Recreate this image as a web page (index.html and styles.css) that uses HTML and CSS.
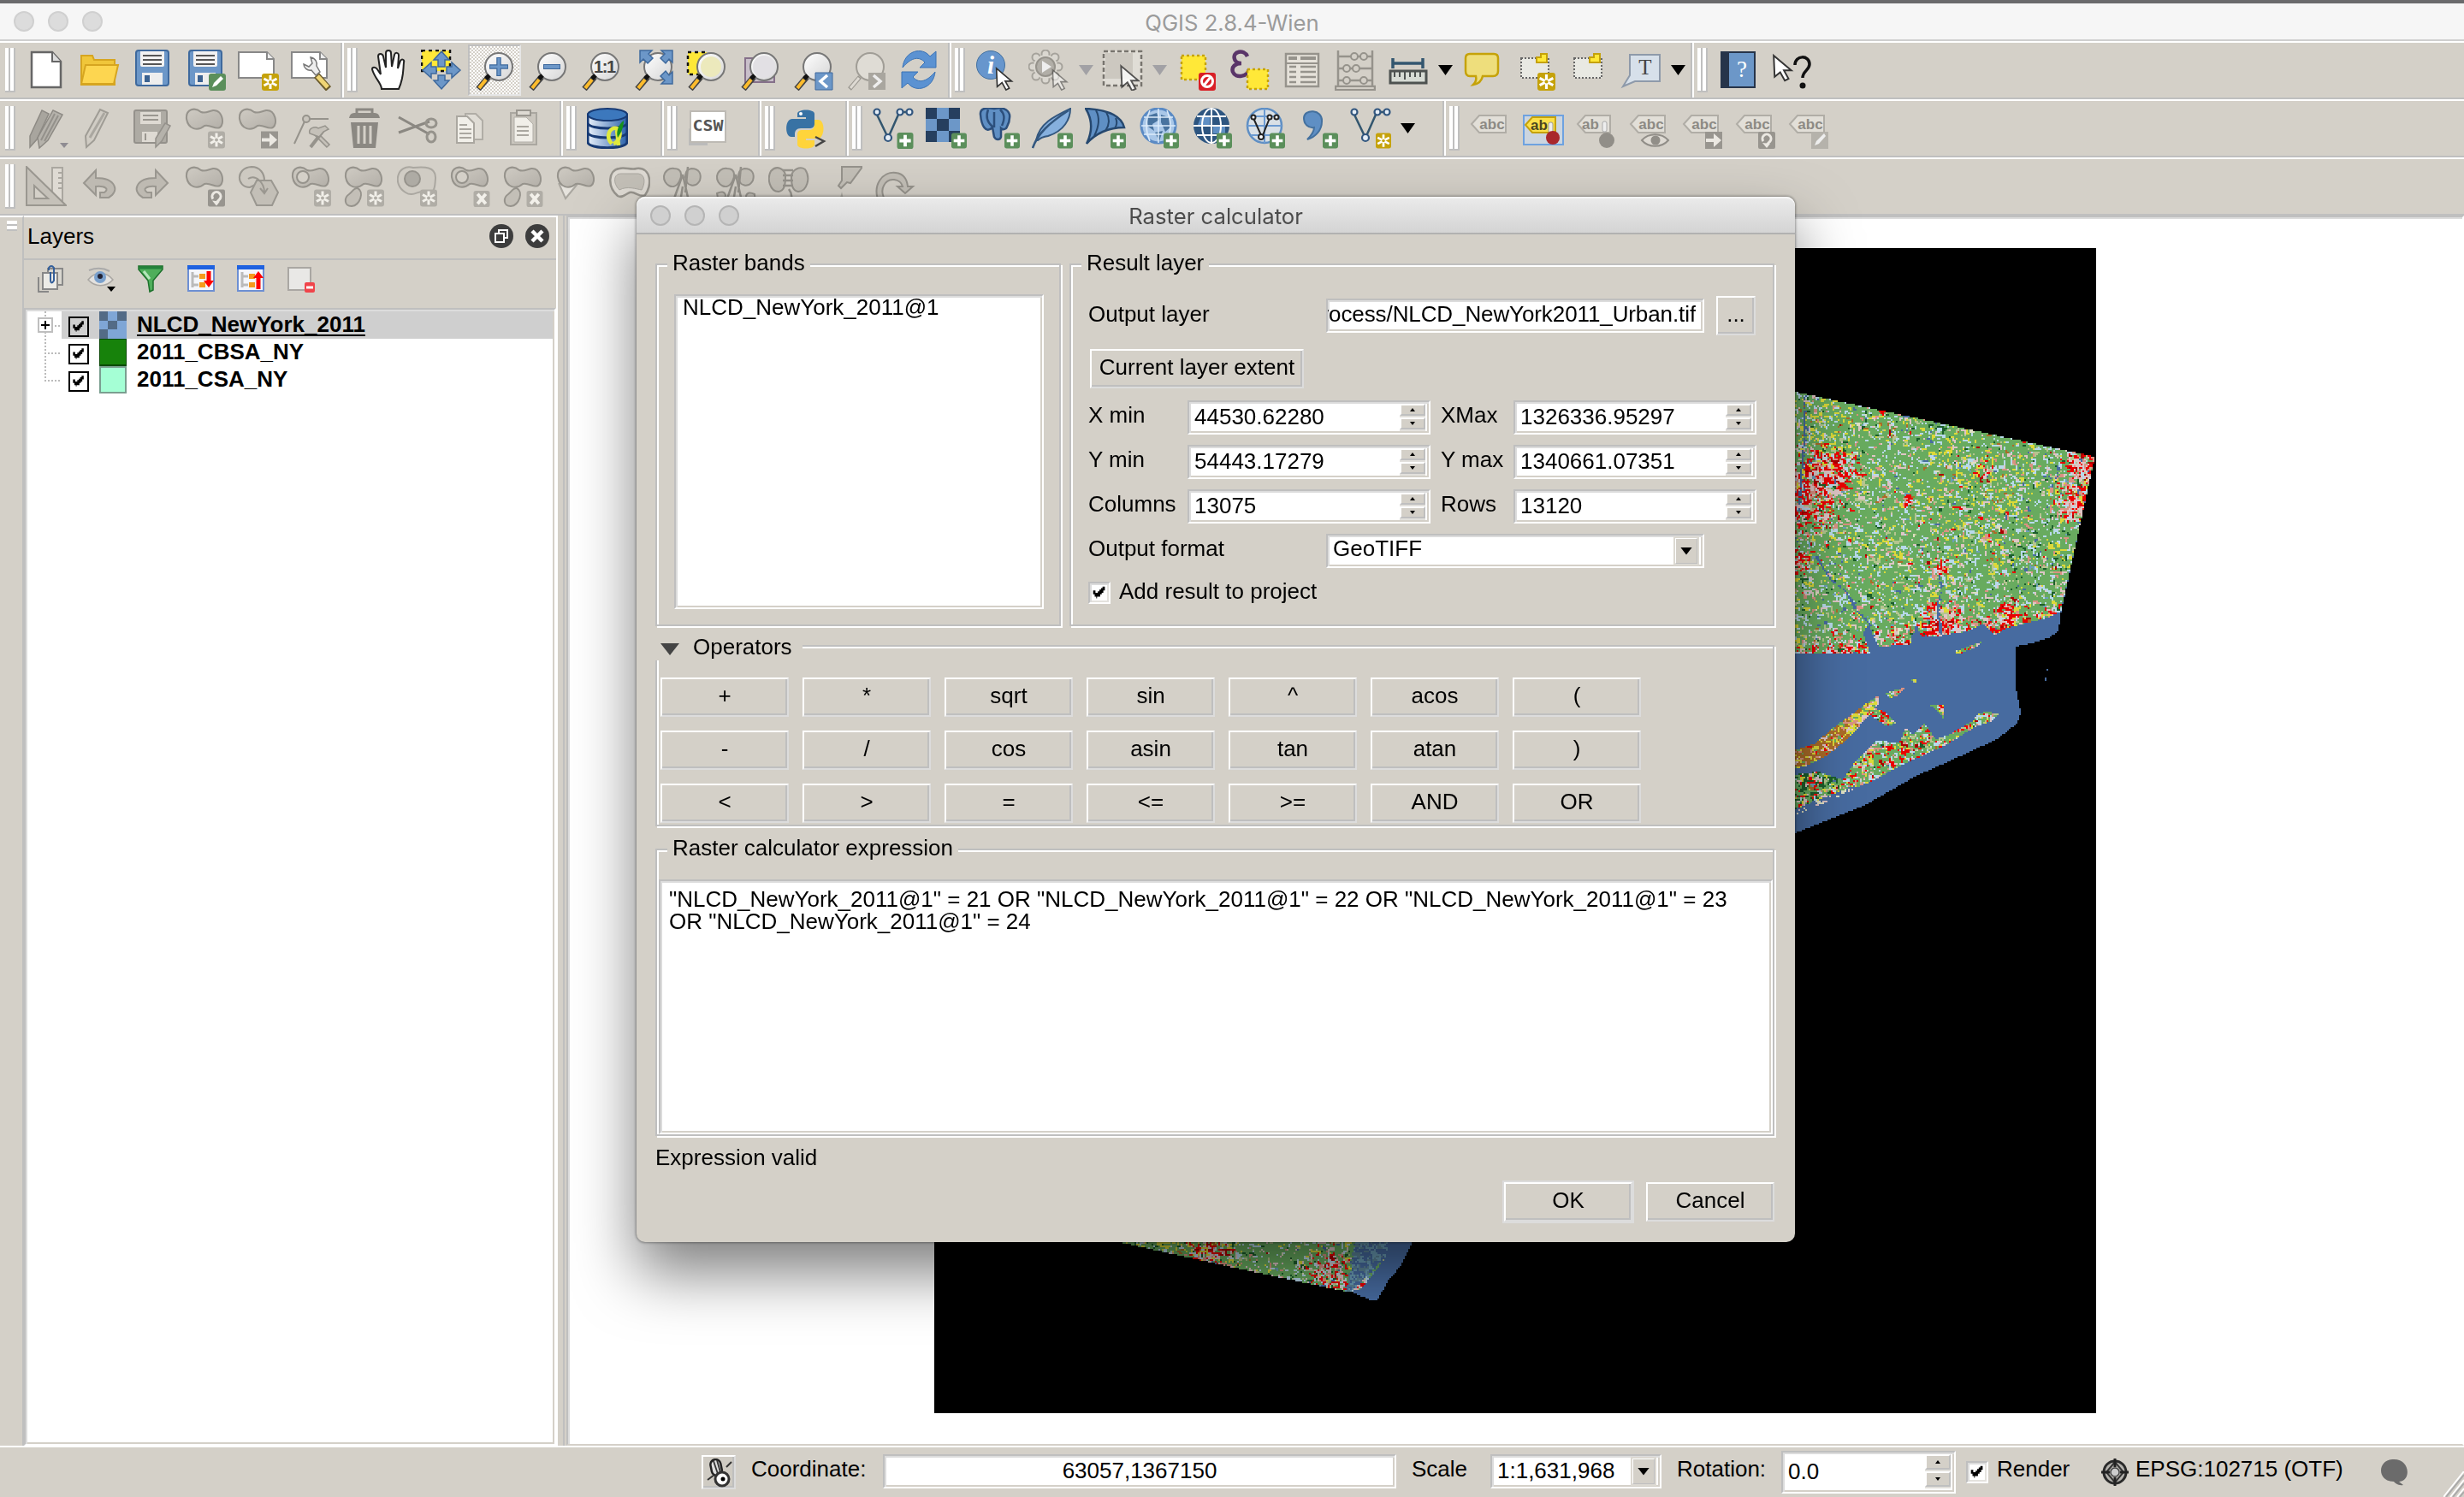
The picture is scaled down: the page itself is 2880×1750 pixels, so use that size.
FILE: index.html
```html
<!DOCTYPE html>
<html lang="en">
<head>
<meta charset="utf-8">
<title>QGIS 2.8.4-Wien</title>
<link rel="stylesheet" href="styles.css">
</head>
<body>
<svg class="defs" aria-hidden="true">
<defs>
<linearGradient id="gLens" x1="0" y1="0" x2="1" y2="1"><stop offset="0" stop-color="#fff"/><stop offset="1" stop-color="#d5d5d5"/></linearGradient>
<linearGradient id="gDb" x1="0" x2="1"><stop offset="0" stop-color="#e8f0fa"/><stop offset="1" stop-color="#2b62ab"/></linearGradient>
<linearGradient id="gBlob" x1="0" y1="0" x2="1" y2="1"><stop offset="0" stop-color="#cfcbc3"/><stop offset="1" stop-color="#b3afa8"/></linearGradient>
</defs>
<symbol id="bPlus" viewBox="0 0 20 20"><rect width="20" height="20" rx="3" fill="#5b8f5b"/><path d="M10 3v14M3 10h14" stroke="#fff" stroke-width="4"/></symbol>
<symbol id="bPen" viewBox="0 0 20 20"><rect width="20" height="20" rx="3" fill="#5b8f5b"/><path d="M4 16l2-5 8-8 3 3-8 8z" fill="#fff"/></symbol>
<symbol id="bGold" viewBox="0 0 20 20"><rect width="20" height="20" rx="3" fill="#c5a20a"/><path d="M10 2v16M2.500 6l15 8M2.500 14l15-8" stroke="#fff" stroke-width="3"/><circle cx="10" cy="10" r="2" fill="#c5a20a"/></symbol>
<symbol id="bStar" viewBox="0 0 20 20"><rect width="20" height="20" rx="3" fill="#b0ada6"/><path d="M10 2v16M3 6l14 8M3 14l14-8" stroke="#f2f0ea" stroke-width="3"/><circle cx="10" cy="10" r="2" fill="#b0ada6"/></symbol>
<symbol id="bX" viewBox="0 0 20 20"><rect width="20" height="20" rx="3" fill="#b0ada6"/><path d="M5 4l10 12M15 4L5 16" stroke="#f2f0ea" stroke-width="4"/></symbol>
<symbol id="bArrow" viewBox="0 0 20 20"><rect width="20" height="20" fill="#98958f"/><path d="M1 10h12" fill="none" stroke="#ebe8e2" stroke-width="4"/><path d="M10 2l9 8-9 8z" fill="#ebe8e2"/></symbol>
<symbol id="bRot" viewBox="0 0 20 20"><rect width="20" height="20" rx="2" fill="#98958f"/><path d="M6 11a5 5 0 1 1 8 0c-1 2-4 2-4 6" fill="none" stroke="#ebe8e2" stroke-width="3"/><path d="M5 13l5 6 4-5z" fill="#ebe8e2"/></symbol>
<symbol id="blob" viewBox="0 0 48 48"><path d="M2 13C1 1 12-1 19 5c5 2 9-1 14-2 11-1 14 16 8 20-6 3-11-4-18-2C15 28 4 25 2 13z" fill="url(#gBlob)" stroke="#96938c" stroke-width="2"/></symbol>
<symbol id="lens" viewBox="0 0 48 48"><path d="M5 46L17 32" stroke="#444" stroke-width="7"/><path d="M6 45L14 35" stroke="#fdbc2c" stroke-width="4"/><circle cx="29" cy="20" r="16" fill="url(#gLens)" stroke="#777" stroke-width="2"/><path d="M14 34l4-4" stroke="#111" stroke-width="5"/></symbol>
<symbol id="cursor" viewBox="0 0 24 30"><path d="M2 2l19 16h-8l5 9-4 2-5-9-6 5z" fill="#fff" stroke="#333" stroke-width="1.800"/></symbol>

<symbol id="new" viewBox="0 0 48 48"><path d="M7 3h24l10 11v30H7z" fill="#fff" stroke="#666" stroke-width="2.500"/><path d="M31 3v11h10" fill="#ddd" stroke="#666" stroke-width="2"/></symbol>
<symbol id="open" viewBox="0 0 48 48"><path d="M3 7h13l2 5h24v29H3z" fill="#f0c63a" stroke="#d6a520" stroke-width="2"/><path d="M8 18h38l-5 22H3z" fill="#fdd650" stroke="#d6a520" stroke-width="2"/></symbol>
<symbol id="save" viewBox="0 0 48 48"><rect x="5" y="1" width="38" height="41" rx="3" fill="#6c97c8" stroke="#3e699d" stroke-width="2"/><path d="M10 2h28v16q0 2-2 2H12q-2 0-2-2z" fill="#f2f2f2"/><path d="M13 7h22M13 12h22M13 17h22" stroke="#555" stroke-width="1.800"/><path d="M12 27h24v14H12z" fill="#eee"/><path d="M15 30h6v8h-6z" fill="#3b6291"/></symbol>
<symbol id="saveas" viewBox="0 0 48 48"><use href="#save"/><use href="#bPen" x="28" y="28" width="20" height="20"/></symbol>
<symbol id="sheet" viewBox="0 0 48 48"><path d="M1 3h33l8 8v22H1z" fill="#fff" stroke="#888" stroke-width="2"/><path d="M34 3v8h8" fill="#eee" stroke="#888" stroke-width="2"/></symbol>
<symbol id="newprint" viewBox="0 0 48 48"><use href="#sheet"/><use href="#bGold" x="28" y="28" width="20" height="20"/></symbol>
<symbol id="composer" viewBox="0 0 48 48"><use href="#sheet"/><path d="M30 30l14 16" stroke="#6a5a2b" stroke-width="8"/><path d="M31 31l12 13" stroke="#f0d575" stroke-width="5"/><path d="M23 9c6 1 8 6 7 10l4 7-5 4-5-6c-5 1-9-3-9-7l6 3 4-4z" fill="#eee" stroke="#777" stroke-width="1.500"/></symbol>
<symbol id="hand" viewBox="0 0 48 48"><path d="M16 46c0-7-8-12-11-23 0-3 4-3 6 0l4 6-3-21c0-4 5-4 6 0l3 13V4c0-4 6-4 6 0l1 16 3-14c1-3 5-3 5 1l-1 15 3-9c2-3 5-1 4 2-1 10 0 18-6 31z" fill="#fff" stroke="#222" stroke-width="2"/></symbol>
<symbol id="pan" viewBox="0 0 48 48"><path d="M1 1h33v24H1z" fill="#ffe838" stroke="#111" stroke-width="2.500" stroke-dasharray="4 4"/><g fill="#6c97c8" stroke="#3e699d" stroke-width="1.500"><path d="M24 2l9 10h-5v8h-8v-8h-5zM24 46l9-10h-5v-6h-8v6h-5zM2 24l10-9v5h6v8h-6v5zM46 24l-10-9v5h-6v8h6v5z"/></g></symbol>
<symbol id="zin" viewBox="0 0 48 48"><use href="#lens"/><path d="M29 9v22M18 20h22" stroke="#3e699d" stroke-width="5.500"/><path d="M29 10v20M19 20h20" stroke="#6c97c8" stroke-width="3"/></symbol>
<symbol id="zout" viewBox="0 0 48 48"><use href="#lens"/><path d="M19 20h20" stroke="#3e699d" stroke-width="6"/><path d="M20 20h18" stroke="#6c97c8" stroke-width="4"/></symbol>
<symbol id="z11" viewBox="0 0 48 48"><use href="#lens"/><text x="29" y="27" text-anchor="middle" font-size="20" font-weight="bold" textLength="26" fill="#444">1:1</text></symbol>
<symbol id="zfull" viewBox="0 0 48 48"><use href="#lens"/><g fill="#6c97c8" stroke="#3e699d" stroke-width="1.500"><path d="M8 1h14l-4 4 5 5-6 6-5-5-4 4zM46 1H33l4 4-5 5 6 6 4-5 4 4zM46 40H33l4-4-5-5 6-6 4 5 4-4z"/></g></symbol>
<symbol id="zsel" viewBox="0 0 48 48"><path d="M2 3h22v26H2z" fill="#ffe838" stroke="#111" stroke-width="2.500" stroke-dasharray="4 4"/><use href="#lens"/><circle cx="29" cy="20" r="12" fill="#ece9bc"/></symbol>
<symbol id="zlay" viewBox="0 0 48 48"><path d="M7 10h34v28H7z" fill="#c9bfca" stroke="#85708a" stroke-width="2"/><use href="#lens"/><circle cx="29" cy="20" r="13" fill="#e2e0e4"/></symbol>
<symbol id="zlast" viewBox="0 0 48 48"><use href="#lens"/><path d="M27 27h20v20H27z" fill="#6c97c8" stroke="#3e699d"/><path d="M41 30l-8 7 8 7" fill="none" stroke="#fff" stroke-width="3.500"/></symbol>
<symbol id="znext" viewBox="0 0 48 48"><path d="M5 46L17 32" stroke="#9a9790" stroke-width="5"/><path d="M6 45L16 33" stroke="#dedad3" stroke-width="3"/><circle cx="29" cy="20" r="16" fill="#dfdcd5" stroke="#a09d96" stroke-width="2"/><path d="M27 27h20v20H27z" fill="#a9a69f"/><path d="M33 30l8 7-8 7" fill="none" stroke="#eee" stroke-width="3.500"/></symbol>
<symbol id="refresh" viewBox="0 0 48 48"><path d="M5 21C7 1 28-4 37 8l7-6v19H25l6-6C25 8 16 8 5 21z" fill="#5b92d2" stroke="#3b73b5"/><path d="M43 26C41 46 20 51 11 39l-7 6V26h19l-6 6c6 7 15 7 26-6z" fill="#5b92d2" stroke="#3b73b5"/></symbol>
<symbol id="ident" viewBox="0 0 48 48"><circle cx="18" cy="18" r="16.500" fill="#6796cd" stroke="#44719f"/><text x="18" y="28" text-anchor="middle" font-family="Liberation Serif,serif" font-style="italic" font-weight="bold" font-size="29" fill="#fff">i</text><use href="#cursor" x="22" y="20" width="24" height="28"/></symbol>
<symbol id="action" viewBox="0 0 48 48"><g fill="#dad7d0" stroke="#a5a29b" stroke-width="2"><circle cx="20" cy="5" r="4.500"/><circle cx="20" cy="35" r="4.500"/><circle cx="5" cy="20" r="4.500"/><circle cx="35" cy="20" r="4.500"/><circle cx="9" cy="9" r="4.500"/><circle cx="31" cy="9" r="4.500"/><circle cx="9" cy="31" r="4.500"/><circle cx="31" cy="31" r="4.500"/></g><circle cx="20" cy="20" r="14" fill="#dad7d0"/><circle cx="20" cy="20" r="11" fill="#b1aea7" stroke="#96938c" stroke-width="2"/><path d="M16 13l11 7-11 7z" fill="#eee"/><g opacity=".5"><use href="#cursor" x="25" y="22" width="24" height="26"/></g></symbol>
<symbol id="select" viewBox="0 0 48 48"><path d="M2 2h44v40H2z" fill="#e0ddd6" stroke="#77746e" stroke-width="2.500" stroke-dasharray="5 3"/><path d="M4 4h32v30H4z" fill="#ccc8c0"/><g opacity=".8"><use href="#cursor" x="18" y="17" width="30" height="32"/></g></symbol>
<symbol id="desel" viewBox="0 0 48 48"><path d="M7 7h28v28H7z" fill="#ffe838" stroke="#c5a20a" stroke-width="2.500" stroke-dasharray="3 3"/><rect x="27" y="27" width="20" height="21" rx="3" fill="#d91f26"/><circle cx="37" cy="37" r="6.500" fill="none" stroke="#fff" stroke-width="3"/><path d="M33 42l8-10" stroke="#fff" stroke-width="3"/></symbol>
<symbol id="expr" viewBox="0 0 48 48"><path d="M22 8C18-1 4 2 7 11c1 4 6 5 8 5C8 16 3 20 5 26c3 8 17 6 19-3" fill="none" stroke="#5a3569" stroke-width="4.500"/><path d="M22 23h24v23H22z" fill="#ffe838" stroke="#c5a20a" stroke-width="2.500" stroke-dasharray="3 3"/></symbol>
<symbol id="table" viewBox="0 0 48 48"><path d="M5 5h38v38H5z" fill="#e6e2da" stroke="#96938c" stroke-width="2.500"/><path d="M8 10h10M22 10h18" stroke="#96938c" stroke-width="4"/><path d="M5 16h38" stroke="#96938c" stroke-width="2"/><path d="M9 20h8M22 20h18M9 26h8M22 26h18M9 32h8M22 32h18M9 38h8M22 38h18" stroke="#96938c" stroke-width="2.500"/></symbol>
<symbol id="abacus" viewBox="0 0 48 48"><path d="M4 1v42M44 1v42M1 43h46v4H1zM4 8h40M4 22h40M4 36h40" fill="#e6e2da" stroke="#96938c" stroke-width="2.500"/><g fill="#d4d0c8" stroke="#96938c" stroke-width="2"><circle cx="23" cy="8" r="4"/><circle cx="34" cy="8" r="4"/><circle cx="14" cy="22" r="4"/><circle cx="25" cy="22" r="4"/><circle cx="14" cy="36" r="4"/><circle cx="34" cy="36" r="4"/></g></symbol>
<symbol id="ruler" viewBox="0 0 48 48"><path d="M6 10v12M41 10v12M6 16h35" stroke="#33566f" stroke-width="3.500"/><path d="M3 25h42v14H3z" fill="#d6dbd4" stroke="#4d5250" stroke-width="3"/><path d="M8 26v6M14 26v6M20 26v9M26 26v6M32 26v6M38 26v6" stroke="#4d5250" stroke-width="2"/></symbol>
<symbol id="tips" viewBox="0 0 48 48"><path d="M10 5h28q5 0 5 5v15q0 6-6 6H25c-1 5-5 9-11 10 3-3 4-6 3-10h-7q-5 0-5-6V10q0-5 5-5z" fill="#eede7c" stroke="#c5a20a" stroke-width="2.500"/></symbol>
<symbol id="bm" viewBox="0 0 48 48"><path d="M8 10h32v23H8z" fill="#e9e9e3" stroke="#666" stroke-width="2" stroke-dasharray="2 2"/><path d="M31 5h7v10H26v-6h5z" fill="#ffe838" stroke="#c5a20a" stroke-width="2"/></symbol>
<symbol id="bmnew" viewBox="0 0 48 48"><use href="#bm"/><use href="#bGold" x="27" y="27" width="21" height="21"/></symbol>
<symbol id="text" viewBox="0 0 48 48"><path d="M11 6h35v31H17L3 43l8-13z" fill="#d7e0ea" stroke="#8e9aaa" stroke-width="2"/><text x="29" y="29" text-anchor="middle" font-family="Liberation Serif,serif" font-size="25" fill="#444">T</text></symbol>
<symbol id="book" viewBox="0 0 48 48"><path d="M4 3h39v41H4z" fill="#6c97c8" stroke="#26344a" stroke-width="2"/><path d="M4 3h9v41H4z" fill="#26344a"/><text x="28" y="32" text-anchor="middle" font-family="Liberation Serif,serif" font-size="27" fill="#fff">?</text></symbol>
<symbol id="whats" viewBox="0 0 48 48"><use href="#cursor" x="1" y="1" width="26" height="40"/><path d="M28 18c0-12 17-12 17-1 0 7-8 8-8 16" fill="none" stroke="#111" stroke-width="3.500"/><circle cx="37" cy="42" r="3.500" fill="#111"/></symbol>

<symbol id="pencils" viewBox="0 0 48 48"><g stroke="#8d8a84" stroke-width="1.500"><path d="M5 33L19 3l8 4-14 30-8 9z" fill="#a8a59e"/><path d="M14 35L32 3l11 5-17 30-10 9z" fill="#b5b2ab"/></g><path d="M18 38L34 7M22 39L38 9" stroke="#94918b" stroke-width="2"/></symbol>
<symbol id="pencil" viewBox="0 0 48 48"><path d="M8 33L25 2l9 4-16 32-9 8z" fill="#d0ccc4" stroke="#9f9c95" stroke-width="2"/><path d="M13 35L30 6" stroke="#aaa7a0" stroke-width="3"/></symbol>
<symbol id="gsave" viewBox="0 0 48 48"><rect x="3" y="3" width="38" height="38" rx="2" fill="#aeaba4" stroke="#94918b" stroke-width="2"/><path d="M10 5h24v14H10zM12 28h18v12H12z" fill="#dedad3"/><path d="M13 9h18M13 14h18M16 30v8" stroke="#9a9790" stroke-width="2"/><path d="M28 36L39 18l6 3-10 18-7 7z" fill="#b5b2ab" stroke="#94918b" stroke-width="1.500"/></symbol>
<symbol id="blobStar" viewBox="0 0 48 48"><use href="#blob"/><use href="#bStar" x="27" y="27" width="20" height="21"/></symbol>
<symbol id="blobArrow" viewBox="0 0 48 48"><use href="#blob"/><use href="#bArrow" x="27" y="27" width="20" height="21"/></symbol>
<symbol id="blobRot" viewBox="0 0 48 48"><use href="#blob"/><use href="#bRot" x="27" y="27" width="20" height="21"/></symbol>
<symbol id="node" viewBox="0 0 48 48"><path d="M4 42L16 16M20 13h24" stroke="#96938c" stroke-width="2"/><circle cx="18" cy="13" r="4" fill="#c9c5bd" stroke="#96938c" stroke-width="2"/><path d="M26 27l18 18" stroke="#96938c" stroke-width="6"/><path d="M27 28l16 16" stroke="#c5c1b9" stroke-width="2.500"/><path d="M40 24L23 46" stroke="#96938c" stroke-width="4"/><path d="M22 30c-2-6 6-9 10-6l8-3 4 4-6 3-5 6z" fill="#c5c1b9" stroke="#96938c" stroke-width="1.500"/></symbol>
<symbol id="trash" viewBox="0 0 48 48"><path d="M15 6V2h18v4" fill="none" stroke="#8b8882" stroke-width="3"/><path d="M6 12q1-6 6-6h24q5 0 6 6zM8 17h32l-3 30H11z" fill="#8b8882"/><path d="M17 21v21M24 21v21M31 21v21" stroke="#d4d0c8" stroke-width="3"/></symbol>
<symbol id="cut" viewBox="0 0 48 48"><path d="M2 11l36 20M2 29l36-13" stroke="#8b8882" stroke-width="3"/><ellipse cx="40" cy="34" rx="5" ry="6" fill="none" stroke="#96938c" stroke-width="3"/><ellipse cx="40" cy="18" rx="6" ry="5" fill="none" stroke="#96938c" stroke-width="3"/></symbol>
<symbol id="copy" viewBox="0 0 48 48"><path d="M18 7h12l8 8v22H18z" fill="#e0ddd6" stroke="#b0ada6" stroke-width="2"/><path d="M8 10h12l8 8v23H8z" fill="#f1efe9" stroke="#aaa7a0" stroke-width="2"/><path d="M11 20h9M11 25h14M11 30h14M11 35h14" stroke="#aaa7a0" stroke-width="1.800"/></symbol>
<symbol id="paste" viewBox="0 0 48 48"><path d="M9 6h30v37H9z" fill="#cac6be" stroke="#aaa7a0" stroke-width="2"/><path d="M16 3h16v6H16z" fill="#dedad3" stroke="#9a9790" stroke-width="2"/><path d="M13 11h14l8 8v21H13z" fill="#f1efe9" stroke="#b0ada6"/><path d="M16 22h14M16 27h14M16 32h14" stroke="#aaa7a0" stroke-width="1.800"/></symbol>
<symbol id="db" viewBox="0 0 48 48"><path d="M1 8v32c0 9 46 9 46 0V8z" fill="url(#gDb)" stroke="#173a74" stroke-width="3"/><ellipse cx="24" cy="8" rx="23" ry="7" fill="#3c78bd" stroke="#173a74" stroke-width="2"/><path d="M1 18c2 8 44 8 46 0M1 29c2 8 44 8 46 0" fill="none" stroke="#173a74" stroke-width="3"/><path d="M29 42c-8-9-2-20 6-18 6 3 4 15-4 18M35 26l2 18" fill="none" stroke="#e0ea3c" stroke-width="4.500"/><path d="M43 15c-7 5-9 14-7 20 4-6 7-12 7-20z" fill="#17901d"/></symbol>
<symbol id="csw" viewBox="0 0 48 48"><path d="M1 24v20h22v-4" fill="#bbb"/><path d="M3 4h41v36H3z" fill="#fff" stroke="#bdbab4" stroke-width="2"/><text x="23.500" y="27" text-anchor="middle" font-family="DejaVu Sans Mono,monospace" font-weight="bold" font-size="18" textLength="36" lengthAdjust="spacingAndGlyphs" fill="#555">CSW</text></symbol>
<symbol id="python" viewBox="0 0 48 48"><path d="M14 12V7c0-6 20-6 20 0v12c0 4-3 5-6 5H18c-5 0-7 3-7 7v3H7C-1 34-1 13 8 13h16v-2H14z" fill="#3872a4"/><path d="M34 14h4c9 0 8 20 1 22H24v2h10v5c0 6-20 6-20 0V31c0-4 3-5 6-5h8c5 0 6-4 6-7z" fill="#ffd43b"/><circle cx="18" cy="7" r="2" fill="#fff"/><path d="M35 34l10 5-10 6" fill="none" stroke="#444" stroke-width="2.500"/></symbol>
<symbol id="vec" viewBox="0 0 48 48"><path d="M5 8l12 25M19 33L30 8M36 5h5" stroke="#33566f" stroke-width="2.500"/><g fill="#e6eef7" stroke="#33577f" stroke-width="2.200"><circle cx="5" cy="5" r="3.500"/><circle cx="32" cy="5" r="3.500"/><circle cx="43" cy="5" r="3.500"/><circle cx="18" cy="35" r="4"/></g></symbol>
<symbol id="vecA" viewBox="0 0 48 48"><use href="#vec"/><use href="#bPlus" x="28" y="29" width="20" height="19"/></symbol>
<symbol id="vecN" viewBox="0 0 48 48"><use href="#vec"/><use href="#bGold" x="30" y="29" width="18" height="19"/></symbol>
<symbol id="rasA" viewBox="0 0 48 48"><path d="M0 0h40v40H0z" fill="#6c97c8"/><path d="M0 0h13v13H0zM27 0h13v13H27zM13 13h14v14H13zM0 27h13v13H0zM27 27h13v13H27z" fill="#263f5f"/><use href="#bPlus" x="30" y="29" width="18" height="19"/></symbol>
<symbol id="pgA" viewBox="0 0 48 48"><path d="M2 8C1-1 12 0 18 1c8-2 16 0 18 7 1 8-2 12-4 16-3 2-5 1-6 0v10c-1 4-6 4-8 0l-2-11c-8 8-13-3-14-15z" fill="#5f8fc4" stroke="#2c4f7c" stroke-width="2.500"/><path d="M11 2c-3 8-1 15 5 20M25 2c5 5 6 10 2 19M18 5v18" fill="none" stroke="#2c4f7c" stroke-width="2.500"/><use href="#bPlus" x="30" y="29" width="18" height="19"/></symbol>
<symbol id="liteA" viewBox="0 0 48 48"><path d="M5 38C9 18 26 10 45 1c0 12-7 26-26 32-6 1-9 2-12 5z" fill="#86b0de" stroke="#33577f" stroke-width="2"/><path d="M1 47C7 30 20 18 43 3" fill="none" stroke="#33577f" stroke-width="2.500"/><use href="#bPlus" x="30" y="29" width="18" height="19"/></symbol>
<symbol id="msA" viewBox="0 0 48 48"><path d="M1 1c20 1 41 6 45 22-18 0-34 7-44 19C9 28 9 14 1 1z" fill="#5f8fc4" stroke="#26486f" stroke-width="2.500"/><path d="M13 3c5 9 4 18-2 30M25 5c4 7 4 15-1 22M36 12c2 4 1 9-1 12" fill="none" stroke="#26486f" stroke-width="2"/><use href="#bPlus" x="30" y="29" width="18" height="19"/></symbol>
<symbol id="wmsA" viewBox="0 0 48 48"><circle cx="24" cy="21" r="20" fill="#a9c7e8" stroke="#5a8ac4" stroke-width="3"/><path d="M10 10l12-4 3 8-8 5 2 8-7-5zM27 8l9 3 3 11-7 6-5-11zM20 29l9-2-4 12z" fill="#48739f"/><path d="M4 21h40M24 1v40M7 11h34M7 31h34M14 3q-8 18 0 36M34 3q8 18 0 36" fill="none" stroke="#dcebfa" stroke-width="1.500"/><use href="#bPlus" x="30" y="29" width="18" height="19"/></symbol>
<symbol id="wcsA" viewBox="0 0 48 48"><circle cx="24" cy="21" r="21" fill="#2d5580"/><path d="M12 10h10v10H8zM26 20h14v10H26z" fill="#5f8fc4"/><path d="M3 21h42M24 0v42M7 10h34M7 32h34" stroke="#fff" stroke-width="2"/><ellipse cx="24" cy="21" rx="11" ry="20" fill="none" stroke="#fff" stroke-width="2"/><use href="#bPlus" x="30" y="29" width="18" height="19"/></symbol>
<symbol id="wfsA" viewBox="0 0 48 48"><circle cx="24" cy="21" r="20" fill="#d9e0e6" stroke="#5f8fc4" stroke-width="2.500"/><path d="M4 21h40M24 1v40M8 10h32M8 32h32" stroke="#6c9bd2" stroke-width="2"/><path d="M11 12l9 20M22 32l8-20" stroke="#222" stroke-width="2"/><g fill="#fff" stroke="#222" stroke-width="2"><circle cx="11" cy="11" r="2.500"/><circle cx="30" cy="11" r="2.500"/><circle cx="38" cy="11" r="2.500"/><circle cx="20" cy="34" r="3"/></g><use href="#bPlus" x="30" y="29" width="18" height="19"/></symbol>
<symbol id="csvA" viewBox="0 0 48 48"><path d="M8 12C8 1 30 1 29 16c0 10-7 18-17 21 5-5 8-9 8-14C13 24 8 19 8 12z" fill="#5f8fc4" stroke="#44719f" stroke-width="2"/><use href="#bPlus" x="30" y="29" width="18" height="19"/></symbol>
<symbol id="tag" viewBox="0 0 48 48"><path d="M2 19L11 9h31v20H11z" fill="#e2dfd8" stroke="#b0ada6" stroke-width="2"/><text x="26" y="25" text-anchor="middle" font-weight="bold" font-size="17" fill="#8d8a84">abc</text></symbol>
<symbol id="tagY" viewBox="0 0 48 48"><path d="M1 9h46v34H1z" fill="#ccd5df" stroke="#6ea2e0" stroke-width="2"/><path d="M3 20l8-9h27v18H11z" fill="#fbe04a" stroke="#c5a20a" stroke-width="2"/><text x="19" y="26" text-anchor="middle" font-weight="bold" font-size="17" fill="#4b4620">ab</text><rect x="30" y="17" width="5" height="12" rx="2" fill="#eee" stroke="#999"/><ellipse cx="35" cy="35" rx="8" ry="8" fill="#a9272c"/></symbol>
<symbol id="tagP" viewBox="0 0 48 48"><path d="M2 19L11 9h29v20H11z" fill="#e2dfd8" stroke="#b0ada6" stroke-width="2"/><text x="17" y="25" text-anchor="middle" font-weight="bold" font-size="17" fill="#8d8a84">ab</text><rect x="31" y="16" width="5" height="12" rx="2" fill="#eee" stroke="#aaa"/><ellipse cx="36" cy="38" rx="9" ry="9" fill="#918e88"/></symbol>
<symbol id="tagE" viewBox="0 0 48 48"><use href="#tag"/><path d="M15 38c8-9 23-9 31 0-8 9-23 9-31 0z" fill="#dedad3" stroke="#918e88" stroke-width="2"/><circle cx="31" cy="38" r="5.500" fill="#918e88"/></symbol>
<symbol id="tagA" viewBox="0 0 48 48"><use href="#tag"/><use href="#bArrow" x="27" y="28" width="20" height="20"/></symbol>
<symbol id="tagR" viewBox="0 0 48 48"><use href="#tag"/><use href="#bRot" x="27" y="28" width="20" height="20"/></symbol>
<symbol id="tagC" viewBox="0 0 48 48"><use href="#tag"/><path d="M27 28h20v20H27z" fill="#b5b2ab"/><path d="M31 44l2-5 9-9 2 3-8 9z" fill="#eee"/></symbol>

<symbol id="cad" viewBox="0 0 48 48"><path d="M31 2h12v44H31z" fill="#dedad3" stroke="#aaa7a0" stroke-width="2"/><path d="M38 8h5M38 14h5M38 20h5M38 26h5" stroke="#aaa7a0" stroke-width="2"/><path d="M1 1v45h46zM10 23v15h16z" fill="#c5c1b9" fill-rule="evenodd" stroke="#9a9790" stroke-width="2"/></symbol>
<symbol id="undo" viewBox="0 0 48 48"><path d="M6 20L20 5v9c24 0 28 16 15 23H25v-6h5c6-4 1-8-10-7v10z" fill="#bebab2" stroke="#9a9790" stroke-width="2"/></symbol>
<symbol id="redo" viewBox="0 0 48 48"><path d="M42 20L28 5v9C4 14 0 30 13 37h10v-6h-5c-6-4-1-8 10-7v10z" fill="#bebab2" stroke="#9a9790" stroke-width="2"/></symbol>
<symbol id="simp" viewBox="0 0 48 48"><path d="M14 25C-2 25-3 2 16 1c10 0 15 8 15 16z" fill="#cdc9c1" stroke="#9a9790" stroke-width="2"/><path d="M22 17h17l8 14-7 15H22l-7-15z" fill="#c3bfb7" stroke="#9a9790" stroke-width="2"/><path d="M12 15c9-6 19 5 19 16M26 26l5 6 4-6" fill="none" stroke="#9a9790" stroke-width="2"/></symbol>
<symbol id="ringS" viewBox="0 0 48 48"><use href="#blob"/><circle cx="14" cy="13" r="7" fill="#d4d0c8" stroke="#96938c" stroke-width="2"/><use href="#bStar" x="27" y="27" width="20" height="21"/></symbol>
<symbol id="partS" viewBox="0 0 48 48"><use href="#blob"/><path d="M16 26c8 4 3 20-7 21-9 0-9-10-3-14 4-3 6-8 10-7z" fill="#c3bfb7" stroke="#96938c" stroke-width="2"/><use href="#bStar" x="27" y="27" width="20" height="21"/></symbol>
<symbol id="fillS" viewBox="0 0 48 48"><path d="M10 31C-6 22 0-3 19 2c12-1 27-2 26 13-1 10 0 18-12 15-8-2-14 7-23 1z" fill="#d0ccc4" stroke="#aaa7a0" stroke-width="2"/><circle cx="18" cy="15" r="9" fill="#aeaba4" stroke="#96938c" stroke-width="2"/><use href="#bStar" x="27" y="27" width="20" height="21"/></symbol>
<symbol id="ringX" viewBox="0 0 48 48"><use href="#blob"/><circle cx="14" cy="13" r="7" fill="#d4d0c8" stroke="#96938c" stroke-width="2"/><use href="#bX" x="27" y="29" width="20" height="19"/></symbol>
<symbol id="partX" viewBox="0 0 48 48"><use href="#blob"/><path d="M16 26c8 4 3 20-7 21-9 0-9-10-3-14 4-3 6-8 10-7z" fill="#c3bfb7" stroke="#96938c" stroke-width="2"/><use href="#bX" x="27" y="29" width="20" height="19"/></symbol>
<symbol id="reshape" viewBox="0 0 48 48"><path d="M3 20l8 18 14-17" fill="#e6e3dd" stroke="#aaa7a0" stroke-width="2"/><use href="#blob"/></symbol>
<symbol id="offset" viewBox="0 0 48 48"><path d="M10 35C-2 25-2 5 12 3c6-2 14 2 20 0C50 1 50 24 42 34c-6 4-12-5-18-3-5 2-9 7-14 4z" fill="#dedad3" stroke="#96938c" stroke-width="2.500"/><path d="M12 28C4 20 5 9 14 9h20c9 1 8 12 4 19-6-1-17-5-26 0z" fill="#c3bfb7" stroke="#aaa7a0"/></symbol>
<symbol id="split" viewBox="0 0 48 48"><path d="M14 3c10 0 9 10 6 15C14 30 1 22 2 12 3 6 8 2 14 3zM34 3c10 0 12 7 10 14-5 9-16 7-17-4 0-5 2-9 7-10z" fill="#c3bfb7" stroke="#96938c" stroke-width="2"/><path d="M24 10L14 38M24 10l9 40M30 1l-3 30M24 24l-4 24" fill="none" stroke="#96938c" stroke-width="2.500"/></symbol>
<symbol id="splitP" viewBox="0 0 48 48"><use href="#split"/><path d="M2 32q8-4 10 2l-2 14H5zM46 33q-8-4-10 2l2 14h9z" fill="#c3bfb7" stroke="#96938c" stroke-width="2"/></symbol>
<symbol id="merge" viewBox="0 0 48 48"><path d="M3 6C10-2 20 4 20 12c0 10-1 17-8 18C2 30-2 15 3 6zM43 4c-6-4-15 0-16 8 0 10 1 17 8 18 10 0 15-16 8-26z" fill="#c3bfb7" stroke="#96938c" stroke-width="2"/><path d="M17 5h12M17 11h12M17 17h12M17 23h12M24 27q6 8 1 20" fill="none" stroke="#96938c" stroke-width="2.500"/></symbol>
<symbol id="tube" viewBox="0 0 48 48"><path d="M24 1h24L34 20l-4-1-7 7-3-3 4-6z" fill="#c3bfb7" stroke="#96938c" stroke-width="2"/><path d="M24 30l-5 18h9z" fill="#aeaba4"/></symbol>
<symbol id="rot" viewBox="0 0 48 48"><path d="M6 44C-4 22 10 6 25 8c9 1 13 7 14 16h6l-9 8-9-8h6c-2-9-17-12-22-1-4 7 0 14 3 21z" fill="#c3bfb7" stroke="#96938c" stroke-width="2"/></symbol>
<symbol id="check" viewBox="0 0 24 24"><path d="M4 9h3v3h3V10h2V8h2V6h2V4h3v5h-2v3h-2v2h-2v3H9v2H8v-2H6v-3H4z" fill="#000"/></symbol>
<symbol id="globe" viewBox="0 0 32 32"><circle cx="16" cy="16" r="13" fill="#b5b3ae" stroke="#2a2a2a" stroke-width="3"/><path d="M16 4L6 16l10 12 10-12z" fill="none" stroke="#333" stroke-width="2"/><path d="M16 0v10M16 22v10M0 16h10M22 16h10" stroke="#222" stroke-width="3"/><circle cx="16" cy="16" r="5" fill="#ccc" stroke="#444" stroke-width="1.500"/></symbol>
</svg>

<header class="titlebar"><span class="lights"><i></i><i></i><i></i></span><h1>QGIS 2.8.4-Wien</h1></header>

<div class="toolrow">
  <div class="tools w400"><b class="grip"></b><svg><use href="#new"/></svg><svg><use href="#open"/></svg><svg><use href="#save"/></svg><svg><use href="#saveas"/></svg><svg><use href="#newprint"/></svg><svg><use href="#composer"/></svg></div>
  <div class="tools w710"><b class="grip"></b><svg><use href="#hand"/></svg><svg><use href="#pan"/></svg><svg class="pressed"><use href="#zin"/></svg><svg><use href="#zout"/></svg><svg><use href="#z11"/></svg><svg><use href="#zfull"/></svg><svg><use href="#zsel"/></svg><svg><use href="#zlay"/></svg><svg><use href="#zlast"/></svg><svg><use href="#znext"/></svg><svg><use href="#refresh"/></svg></div>
  <div class="tools w868"><b class="grip"></b><svg><use href="#ident"/></svg><svg><use href="#action"/></svg><em class="off"></em><svg><use href="#select"/></svg><em class="off"></em><svg><use href="#desel"/></svg><svg><use href="#expr"/></svg><svg><use href="#table"/></svg><svg><use href="#abacus"/></svg><svg><use href="#ruler"/></svg><em></em><svg><use href="#tips"/></svg><svg><use href="#bmnew"/></svg><svg><use href="#bm"/></svg><svg><use href="#text"/></svg><em></em></div>
  <div class="tools last"><b class="grip"></b><svg><use href="#book"/></svg><svg><use href="#whats"/></svg></div>
</div>
<div class="toolrow">
  <div class="tools w656"><b class="grip"></b><svg><use href="#pencils"/><path d="M40 41h10l-5 6z" fill="#8f8c92"/></svg><svg><use href="#pencil"/></svg><svg><use href="#gsave"/></svg><svg><use href="#blobStar"/></svg><svg><use href="#blobArrow"/></svg><svg><use href="#node"/></svg><svg><use href="#trash"/></svg><svg><use href="#cut"/></svg><svg><use href="#copy"/></svg><svg><use href="#paste"/></svg></div>
  <div class="tools w118"><b class="grip"></b><svg><use href="#db"/></svg></div>
  <div class="tools w114"><b class="grip"></b><svg><use href="#csw"/></svg></div>
  <div class="tools w102"><b class="grip"></b><svg><use href="#python"/></svg></div>
  <div class="tools w698"><b class="grip"></b><svg><use href="#vecA"/></svg><svg><use href="#rasA"/></svg><svg><use href="#pgA"/></svg><svg><use href="#liteA"/></svg><svg><use href="#msA"/></svg><svg><use href="#wmsA"/></svg><svg><use href="#wcsA"/></svg><svg><use href="#wfsA"/></svg><svg><use href="#csvA"/></svg><svg><use href="#vecN"/></svg><em></em></div>
  <div class="tools last"><b class="grip"></b><svg><use href="#tag"/></svg><svg><use href="#tagY"/></svg><svg><use href="#tagP"/></svg><svg><use href="#tagE"/></svg><svg><use href="#tagA"/></svg><svg><use href="#tagR"/></svg><svg><use href="#tagC"/></svg></div>
</div>
<div class="toolrow">
  <div class="tools last"><b class="grip"></b><svg><use href="#cad"/></svg><svg><use href="#undo"/></svg><svg><use href="#redo"/></svg><svg><use href="#blobRot"/></svg><svg><use href="#simp"/></svg><svg><use href="#ringS"/></svg><svg><use href="#partS"/></svg><svg><use href="#fillS"/></svg><svg><use href="#ringX"/></svg><svg><use href="#partX"/></svg><svg><use href="#reshape"/></svg><svg><use href="#offset"/></svg><svg><use href="#split"/></svg><svg><use href="#splitP"/></svg><svg><use href="#merge"/></svg><svg><use href="#tube"/></svg><svg><use href="#rot"/></svg></div>
</div>

<main class="work">
  <div class="dockgrip"><b></b><b></b></div>
  <aside class="layers">
    <div class="dockhead"><span>Layers</span>
      <svg viewBox="0 0 28 28"><circle cx="14" cy="14" r="14" fill="#3d3d3d"/><path d="M11 10V7h10v9h-3M7 11h10v10H7z" fill="none" stroke="#fff" stroke-width="2"/></svg>
      <svg viewBox="0 0 28 28"><circle cx="14" cy="14" r="14" fill="#3d3d3d"/><path d="M8 8l12 12M20 8L8 20" stroke="#fff" stroke-width="4.500"/></svg></div>
    <div class="docktools">
      <svg viewBox="0 0 32 32"><path d="M2 14v17h12" fill="none" stroke="#888" stroke-width="2"/><path d="M13 4h17v19H13z" fill="#d9d7d0" stroke="#888" stroke-width="2"/><path d="M7 9h17v19H7z" fill="#ecebe7" stroke="#888" stroke-width="2"/><path d="M14 6V3q3-4 6 0v15q-3 5-4 0V8" fill="none" stroke="#345f9a" stroke-width="2"/></svg>
      <svg viewBox="0 0 32 32"><path d="M2 6q13-5 24 1" fill="none" stroke="#aaa" stroke-width="2"/><path d="M1 17c8-10 21-10 29 0-8 9-21 9-29 0z" fill="#e4e2df" stroke="#a9a6a2" stroke-width="1.500"/><circle cx="15" cy="14" r="7" fill="#7aa0cc"/><circle cx="15" cy="13" r="3" fill="#223"/><path d="M23 25h10l-5 6z"/></svg>
      <svg viewBox="0 0 32 32"><path d="M2 1h28v4L19 18v11l-4 2-2-13L2 5z" fill="#4fae5b" stroke="#1c702b" stroke-width="1.500"/><path d="M3 3h26" stroke="#23813a" stroke-width="3"/><path d="M8 7l7 9" stroke="#b4e6ba" stroke-width="3"/></svg>
      <svg viewBox="0 0 32 32"><path d="M1 1h30v29H1z" fill="#f4f6fb" stroke="#6d8fd3" stroke-width="2"/><path d="M0 0h32v5H0z" fill="#1f62e0"/><path d="M6 8v18M6 13h7M6 23h7" stroke="#bbb" stroke-width="3"/><path d="M14 10h7v6h-7zM14 20h7v6h-7z" fill="#f59a1c"/><path d="M25 7v14" stroke="#f00" stroke-width="5"/><path d="M19 18h12l-6 8z" fill="#f00"/></svg>
      <svg viewBox="0 0 32 32"><path d="M1 1h30v29H1z" fill="#f4f6fb" stroke="#6d8fd3" stroke-width="2"/><path d="M0 0h32v5H0z" fill="#1f62e0"/><path d="M6 8v18M6 13h7M6 23h7" stroke="#bbb" stroke-width="3"/><path d="M14 10h7v6h-7zM14 20h7v6h-7z" fill="#f59a1c"/><path d="M25 12v16" stroke="#f00" stroke-width="5"/><path d="M19 15h12l-6-8z" fill="#f00"/></svg>
      <svg viewBox="0 0 32 32"><path d="M1 3h26v26H1z" fill="#e9e8e6" stroke="#aaa7a3" stroke-width="2"/><rect x="20" y="20" width="12" height="12" rx="2" fill="#f0444a"/><path d="M22 26h8" stroke="#fff" stroke-width="3"/></svg>
    </div>
    <ul class="tree">
      <li class="sel"><span class="branch first"><i></i></span><span class="box"><svg><use href="#check"/></svg></span><svg class="sw" viewBox="0 0 32 32"><path d="M0 0h32v32H0z" fill="#7fa6d6"/><path d="M0 0h10v11H0zM21 0h11v11H21zM10 11h11v10H10zM0 21h10v11H0z" fill="#536b86"/></svg><span class="name">NLCD_NewYork_2011</span></li>
      <li><span class="branch"></span><span class="box"><svg><use href="#check"/></svg></span><span class="sw green"></span><span class="name">2011_CBSA_NY</span></li>
      <li><span class="branch end"></span><span class="box"><svg><use href="#check"/></svg></span><span class="sw mint"></span><span class="name">2011_CSA_NY</span></li>
    </ul>
  </aside>
  <div class="mapframe"><canvas id="map" width="1358" height="1362"></canvas></div>
</main>

<footer class="status">
  <span class="mouse"><svg viewBox="0 0 34 34"><rect x="7" y="1" width="12" height="19" rx="6" transform="rotate(-12 13 10)" fill="#ddd" stroke="#222" stroke-width="2.500"/><path d="M10 3l5 15M14 2l4 14" stroke="#333" stroke-width="1.800"/><circle cx="20" cy="24" r="8" fill="#fff" stroke="#333" stroke-width="3"/><circle cx="21" cy="24" r="2.500"/><path d="M3 25l8-6M25 10l6-6" stroke="#333" stroke-width="2"/></svg></span>
  <label class="s1">Coordinate:</label><div class="field coord">63057,1367150</div>
  <label class="s2">Scale</label><div class="field combo scale"><span>1:1,631,968</span><i class="drop"></i></div>
  <label class="s3">Rotation:</label><div class="field spin rotation"><span>0.0</span><i class="ud"><u></u><u class="dn"></u></i></div>
  <span class="chk"><svg><use href="#check"/></svg></span><label class="s4">Render</label>
  <svg class="globe"><use href="#globe"/></svg><label class="s5">EPSG:102715 (OTF)</label>
  <svg class="talk" viewBox="0 0 32 32"><path d="M16 1c20 0 20 26 6 26l5 4c-6 1-9-2-11-4C-4 27-4 1 16 1z" fill="#6b6b6b"/></svg>
  <svg class="size" viewBox="0 0 24 30"><path d="M0 30L24 0M8 30L24 10M16 30l8-10" stroke="#fff" stroke-width="2"/><path d="M3 30L24 4M11 30l13-16M19 30l5-6" stroke="#aaa" stroke-width="2"/></svg>
</footer>

<section class="dialog">
  <header class="dtitle"><span class="lights"><i></i><i></i><i></i></span><h2>Raster calculator</h2></header>
  <div class="dbody">
    <div class="top">
      <div class="group bands"><h3>Raster bands</h3><div class="list">NLCD_NewYork_2011@1</div></div>
      <div class="group result"><h3>Result layer</h3>
        <div class="row out"><label>Output layer</label><div class="field path"><span>/process/NLCD_NewYork2011_Urban.tif</span></div><button class="more">...</button></div>
        <button class="extent">Current layer extent</button>
        <div class="row"><label>X min</label><div class="field spin"><span>44530.62280</span><i class="ud"><u></u><u class="dn"></u></i></div><label class="r">XMax</label><div class="field spin"><span>1326336.95297</span><i class="ud"><u></u><u class="dn"></u></i></div></div>
        <div class="row"><label>Y min</label><div class="field spin"><span>54443.17279</span><i class="ud"><u></u><u class="dn"></u></i></div><label class="r">Y max</label><div class="field spin"><span>1340661.07351</span><i class="ud"><u></u><u class="dn"></u></i></div></div>
        <div class="row"><label>Columns</label><div class="field spin"><span>13075</span><i class="ud"><u></u><u class="dn"></u></i></div><label class="r">Rows</label><div class="field spin"><span>13120</span><i class="ud"><u></u><u class="dn"></u></i></div></div>
        <div class="row fmt"><label>Output format</label><div class="field combo"><span>GeoTIFF</span><i class="drop"></i></div></div>
        <div class="add"><span class="chk"><svg><use href="#check"/></svg></span><label>Add result to project</label></div>
      </div>
    </div>
    <div class="group ops"><h3><svg viewBox="0 0 22 14"><path d="M0 0h22L11 14z" fill="#444"/></svg>Operators</h3>
      <div class="keys">
        <button>+</button><button>*</button><button>sqrt</button><button>sin</button><button>^</button><button>acos</button><button>(</button>
        <button>-</button><button>/</button><button>cos</button><button>asin</button><button>tan</button><button>atan</button><button>)</button>
        <button>&lt;</button><button>&gt;</button><button>=</button><button>&lt;=</button><button>&gt;=</button><button>AND</button><button>OR</button>
      </div>
    </div>
    <div class="group expr"><h3>Raster calculator expression</h3>
      <div class="code">"NLCD_NewYork_2011@1" = 21 OR "NLCD_NewYork_2011@1" = 22 OR "NLCD_NewYork_2011@1" = 23<br>OR "NLCD_NewYork_2011@1" = 24</div></div>
    <p class="valid">Expression valid</p>
    <div class="actions"><button class="ok">OK</button><button>Cancel</button></div>
  </div>
</section>
<script src="map.js"></script>
</body>
</html>
```
FILE: styles.css
```css
* { box-sizing: border-box; }
html, body { margin: 0; }
body { width: 2880px; height: 1750px; overflow: hidden; display: flex; flex-direction: column; background: #d4d0c8; font: 26px/30px "Liberation Sans", Arial, sans-serif; color: #000; }
h1, h2, h3, p, ul { margin: 0; padding: 0; font-weight: normal; list-style: none; }
svg { display: block; }
.defs { position: absolute; width: 0; height: 0; }

.titlebar { height: 48px; flex: none; display: flex; align-items: center; background: #f6f6f6; border-top: 4px solid #6a6a6c; border-bottom: 2px solid #cfcfcf; padding-left: 16px; }
.titlebar h1, .dtitle h2 { flex: 1; text-align: center; font: 25.700px/30px Inter, Roboto, sans-serif; }
.titlebar h1 { color: #9b9b9b; margin: 3px 120px 0 0; }
.lights { display: flex; gap: 16px; width: 104px; }
.lights i { width: 24px; height: 24px; border-radius: 50%; background: #dcdcdc; border: 2px solid #d0d0d0; }

.toolrow { height: 68px; flex: none; display: flex; border-top: 2px solid #fff; border-bottom: 2px solid #bfbfbf; }
.tools { display: flex; align-items: center; flex: none; padding-left: 6px; border-right: 2px solid #bfbfbf; box-shadow: 2px 0 #fff; }
.tools.last { flex: 1; border: 0; box-shadow: none; }
.w400 { width: 400px; } .w710 { width: 710px; } .w868 { width: 868px; }
.w656 { width: 656px; } .w118 { width: 118px; } .w114 { width: 114px; } .w102 { width: 102px; } .w698 { width: 698px; }
.grip { width: 12px; height: 52px; flex: none; margin-right: 5px; background: linear-gradient(90deg, #fff 4px, #bfbfbf 4px 6px, #fff 6px 10px, #bfbfbf 10px); border-bottom: 2px solid #bfbfbf; }
.tools svg { width: 62px; height: 60px; padding: 6px 7px; flex: none; overflow: visible; }
.tools svg.pressed { background: repeating-conic-gradient(#d4d0c8 0 25%, #fff 0 50%) 0 0/4px 4px; border: 2px solid; border-color: #bfbfbf #e6e6e6 #e6e6e6 #bfbfbf; padding: 4px 5px; }
.tools em { width: 24px; height: 12px; margin: 0; flex: none; }
.tools em::before { content: ""; display: block; width: 17px; height: 12px; margin-left: 4px; background: #000; clip-path: polygon(0 0, 100% 0, 50% 100%); }
.tools em.off::before { background: #a2a1a5; }

.work { display: flex; height: 1438px; flex: none; }
.dockgrip { width: 28px; flex: none; padding: 4px 0 0 8px; border-right: 2px solid #bfbfbf; border-top: 2px solid #fff; }
.dockgrip b { display: block; width: 12px; height: 6px; background: #fff; border-bottom: 2px solid #bfbfbf; }
.layers { width: 624px; flex: none; display: flex; flex-direction: column; border: solid #fff; border-width: 2px 2px 0 0; }
.dockhead { height: 50px; display: flex; align-items: center; padding: 0 8px 4px 4px; border-bottom: 2px solid #bfbfbf; }
.dockhead span { flex: 1; }
.dockhead svg { width: 28px; height: 28px; margin-left: 14px; }
.docktools { height: 56px; display: flex; gap: 26.500px; padding: 6px 0 0 15px; }
.docktools svg { width: 32px; height: 32px; overflow: visible; }
.tree { flex: 1; background: #fff; border: 2px solid; border-color: #bfbfbf #fff #fff #bfbfbf; box-shadow: inset 2px 2px #dcdcdc, inset -2px -2px #d4d0c8; padding: 2px 2px 0; }
.tree li { display: flex; height: 32px; align-items: center; font-weight: bold; }
.tree .sel { background: #cfcfcf; }
.branch { width: 40px; height: 32px; margin-right: 8px; flex: none; display: flex; align-items: center; justify-content: center; background: repeating-linear-gradient(#bbb 0 2px, #fff0 2px 4px) 20px 0/2px 32px no-repeat, repeating-linear-gradient(90deg, #bbb 0 2px, #fff0 2px 4px) 20px 16px/20px 2px no-repeat, #fff; }
.branch.end { background-size: 2px 18px, 20px 2px, auto; }
.branch i { width: 18px; height: 18px; border: 2px solid #bfbfbf; background: linear-gradient(#000, #000) center/10px 2px no-repeat, linear-gradient(#000, #000) center/2px 10px no-repeat, #fff; margin-left: 1px; }
.box { width: 24px; height: 24px; border: 2px solid #000; background: #fff; margin: 4px 12px 0 0; }
.sel .box { background: none; }
.box svg { width: 20px; height: 20px; }
.sw { width: 32px; height: 32px; }
.green { background: #17820b; border: 1px solid #0a4a05; border-width: 1px 1px 2px; }
.mint { background: #a5ffd5; border: 2px solid #7b9f90; }
.name { margin-left: 12px; margin-top: -2px; letter-spacing: 0; line-height: 28px; }
.sel .name { text-decoration: underline 2px; text-decoration-skip-ink: none; text-underline-offset: 3px; }
.mapframe { flex: 1; margin-left: 10px; background: #fff; border: 2px solid; border-color: #bfbfbf #fff #d4d0c8 #bfbfbf; box-shadow: inset 2px 2px #dcdcdc, -2px 0 #d4d0c8, -4px 0 #bfbfbf; }
.mapframe canvas { display: block; margin: 36px 0 0 428px; }

.status { height: 60px; flex: none; display: flex; align-items: center; border-top: 2px solid #fff; padding-left: 820px; }
.status label { flex: none; padding-bottom: 8px; white-space: nowrap; }
.mouse { width: 40px; height: 40px; padding: 2px; border: 2px solid; border-color: #fff #dcdcdc #dcdcdc #fff; box-shadow: inset -2px -2px #bfbfbf; background: #cfcbc3; }
.mouse svg { width: 34px; height: 34px; }
.s1 { width: 172px; padding-left: 18px; }
.s2 { width: 110px; padding-left: 18px; }
.s3 { width: 140px; padding-left: 18px; }
.s4 { width: 132px; padding-left: 10px; }
.s5 { width: 294px; padding-left: 8px; }
.field { height: 40px; background: #fff; border: 2px solid; border-color: #bfbfbf #fff #fff #bfbfbf; box-shadow: inset 2px 2px #dcdcdc, inset -2px -2px #d4d0c8; padding: 2px 0 0 6px; flex: none; white-space: nowrap; }
.status .field { margin-bottom: 2px; }
.coord { width: 600px; text-align: center; padding-left: 0; }
.scale { width: 200px; }
.status .rotation { width: 204px; height: 50px; padding-top: 7px; margin-bottom: 0; }
.globe { width: 32px; height: 32px; }
.talk { width: 32px; height: 32px; }
.size { width: 24px; height: 30px; margin: 28px 0 0 auto; }
.combo, .spin { display: flex; justify-content: space-between; }
.drop { width: 28px; height: 32px; margin: 0 5px 0 0; border: 2px solid; border-color: #fff #bfbfbf #bfbfbf #fff; outline: 2px solid #dcd9d2; outline-offset: -1px; background: #d4d0c8; display: flex; align-items: center; justify-content: center; }
.drop::before { content: ""; width: 14px; height: 9px; background: #000; clip-path: polygon(0 0, 100% 0, 50% 100%); }
.ud { width: 30px; margin: 0 4px 2px 0; display: flex; flex-direction: column; justify-content: space-between; background: #e2e0dc; }
.rotation .ud { margin: -5px 4px 4px 0; }
.ud u { flex: 1; max-height: 22px; margin-bottom: 2px; background: #d4d0c8; border: 2px solid; border-color: #fff #bfbfbf #bfbfbf #fff; display: flex; align-items: center; justify-content: center; }
.ud u::before { content: ""; width: 6px; height: 4px; background: #000; clip-path: polygon(50% 0, 100% 100%, 0 100%); }
.ud u.dn::before { clip-path: polygon(0 0, 100% 0, 50% 100%); }
.chk { width: 26px; height: 26px; flex: none; background: #fff; border: 2px solid; border-color: #bfbfbf #fff #fff #bfbfbf; box-shadow: inset 2px 2px #dcdcdc, inset -2px -2px #e4e2de; }
.chk svg { width: 22px; height: 22px; }
.status .chk { margin-left: 12px; }

.dialog { position: absolute; left: 744px; top: 230px; width: 1354px; height: 1222px; border-radius: 10px; background: #d4d0c8; box-shadow: 0 0 3px 1px rgba(0,0,0,.35), 0 36px 70px rgba(0,0,0,.5); }
.dtitle { height: 44px; display: flex; align-items: center; padding: 0 0 2px 16px; border-bottom: 2px solid #b1b1b1; border-radius: 10px 10px 0 0; background: linear-gradient(#ebebeb, #d4d4d4); box-shadow: inset 0 2px #f6f6f6; }
.dtitle .lights { padding-top: 3px; }
.dtitle h2 { color: #4c4c4c; margin: 6px 120px 0 0; }
.dtitle .lights i { background: #d0d0d0; border-color: #b5b5b5; }
.dbody { padding: 34px 24px 0 22px; }
.top { display: flex; gap: 10px; }
.group { border: 2px solid #bfbfbf; box-shadow: inset 2px 2px #fff, 2px 2px #fff; }
.group h3 { width: max-content; height: 30px; padding: 0 6px; margin: -18px 0 0 12px; background: #d4d0c8; font-size: 26px; line-height: 30px; }
.bands { width: 474px; height: 424px; }
.list { width: 432px; height: 368px; margin: 22px 0 0 20px; line-height: 24px; padding: 1px 0 0 8px; }
.list, .code { background: #fff; border: 2px solid; border-color: #bfbfbf #fff #fff #bfbfbf; box-shadow: inset 2px 2px #dcdcdc, inset -2px -2px #d4d0c8; }
.result { width: 824px; height: 424px; display: flex; flex-direction: column; }
.result h3 { margin-left: 12px; }
.row { display: flex; align-items: center; padding-left: 20px; height: 40px; margin-bottom: 12px; }
.row label { width: 116px; padding-bottom: 6px; white-space: nowrap; }
.row label.r { width: 97px; padding-left: 12px; }
.row .spin { width: 284px; }
.out { height: 46px; margin: 24px 0 16px; }
.out label, .fmt label { width: 278px; }
.out label { padding-bottom: 4px; }
.path { width: 442px; display: flex; justify-content: flex-end; overflow: hidden; padding: 1px 8px 0 2px; }
.path span { margin-left: -80px; letter-spacing: -.1px; clip-path: inset(0 0 0 26px); }
button { font: inherit; color: #000; height: 46px; padding: 0 2px 4px; background: #d4d0c8; border: 2px solid; border-color: #fff #dcdcdc #dcdcdc #fff; box-shadow: inset -2px -2px #bfbfbf; border-radius: 0; }
.more { width: 46px; margin-left: 14px; }
.extent { width: 250px; margin: 0 0 14px 22px; flex: none; }
.fmt .combo { width: 442px; padding-top: 0; }
.fmt .drop { margin-top: 2px; }
.add { display: flex; padding: 4px 0 0 20px; align-items: center; }
.add label { margin: -4px 0 0 10px; }
.ops { height: 212px; margin-top: 22px; }
.group.ops h3 { width: 174px; height: 31px; margin: -15px 0 0 -4px; padding: 0 0 2px 8px; display: flex; align-items: center; }
.ops h3 svg { flex: none; width: 22px; height: 14px; margin: 6px 16px 0 0; }
.keys { display: grid; grid-template-columns: repeat(7, 150px); gap: 16px; margin: 20px 0 0 4px; }
.expr { height: 336px; margin-top: 26px; }
.code { height: 298px; margin: 22px 0 0 2px; width: 1302px; padding: 8px 10px; line-height: 26px; white-space: nowrap; }
.valid { margin-top: 10px; }
.actions { display: flex; justify-content: flex-end; align-items: center; gap: 16px; margin-top: 12px; height: 50px; }
.actions button { width: 150px; }
.ok { outline: 2px solid #dcdcdc; }
```
FILE: map.js
```js
// Land-cover raster: 2px cells, classes picked by position.
(function () {
  var ctx = document.getElementById('map').getContext('2d');
  var OX = 1092, OY = 290;
  ctx.fillStyle = '#000';
  ctx.fillRect(0, 0, 1358, 1362);

  var seed = 20114;
  function rnd() { seed = (seed * 1103515245 + 12345) & 0x7fffffff; return (seed >>> 8) / 8388608; }
  var lattice = [];
  for (var k = 0; k < 4096; k++) lattice.push(rnd());
  function noise(x, y) {
    var xi = Math.floor(x), yi = Math.floor(y), fx = x - xi, fy = y - yi;
    function g(a, b) { return lattice[((a * 57 + b * 131) % 4096 + 4096) % 4096]; }
    return (g(xi, yi) * (1 - fx) + g(xi + 1, yi) * fx) * (1 - fy) + (g(xi, yi + 1) * (1 - fx) + g(xi + 1, yi + 1) * fx) * fy;
  }
  function inside(p, x, y) {
    var c = false;
    for (var i = 0, j = p.length - 1; i < p.length; j = i++)
      if ((p[i][1] > y) !== (p[j][1] > y) && x < (p[j][0] - p[i][0]) * (y - p[i][1]) / (p[j][1] - p[i][1]) + p[i][0]) c = !c;
    return c;
  }
  function near(x, y, cx, cy, r) { return Math.max(0, 1 - Math.hypot(x - cx, y - cy) / r); }

  var RED = '#eb0000', DRED = '#ab0000', PINK = '#dec5c5', SALMON = '#d99282', GREEN = '#68ab5f', DARK = '#1c5f2c',
      YEL = '#dcd939', BROWN = '#ab6c28', ICE = '#b8d9eb', SAGE = '#b5c58f', SEA = '#476ba0', TEAL = '#6c9fb8', SAND = '#dfdfc2';

  function pick(list) {
    var t = 0, i;
    for (i = 0; i < list.length; i += 2) t += list[i + 1];
    t *= rnd();
    for (i = 0; i < list.length; i += 2) { t -= list[i + 1]; if (t <= 0) return list[i]; }
    return list[0];
  }
  function land(x, y, urban, farm, wood) {
    return pick([GREEN, 5.4 - Math.min(4.9, urban * 6), DARK, .1 + wood, YEL, .22 + farm, ICE, .75, SAGE, .3, PINK, .35 + urban * 1.3,
      SALMON, .16 + urban, RED, .02 + urban * 2.5, DRED, .01 + urban * .4, BROWN, .03 + farm * .12, TEAL, .05, SEA, .05, SAND, .05]);
  }
  function paint(poly, fn) {
    var xs = poly.map(function (p) { return p[0]; }), ys = poly.map(function (p) { return p[1]; });
    var above = {};
    for (var y = Math.min.apply(0, ys) & ~1; y < Math.max.apply(0, ys); y += 2) {
      var last = null;
      for (var x = Math.min.apply(0, xs) & ~1; x < Math.max.apply(0, xs); x += 2) {
        if (!inside(poly, x + 1, y + 1)) continue;
        var r = rnd();
        if (r < .18 && above[x]) last = above[x];
        else if (!last || r > .42) last = fn(x, y);
        above[x] = last;
        ctx.fillStyle = last;
        ctx.fillRect(x - OX, y - OY, 2, 2);
      }
    }
  }

  paint([[2080, 454], [2098, 458], [2449, 534], [2446, 546], [2409, 716], [2406, 738], [2394, 746], [2374, 752], [2356, 756], [2356, 804], [2360, 822], [2362, 834], [2357, 846],
    [2336, 863], [2300, 880], [2240, 907], [2180, 941], [2098, 974], [2080, 980]], function () { return SEA; });

  paint([[2080, 454], [2098, 458], [2449, 534], [2446, 546], [2409, 714], [2395, 722], [2370, 728], [2345, 734], [2332, 743], [2318, 729], [2300, 738], [2280, 741], [2260, 745], [2246, 745],
    [2240, 729], [2233, 753], [2210, 755], [2196, 757], [2184, 730], [2178, 740], [2186, 764], [2140, 765], [2080, 764]], function (x, y) {
    var coast = Math.max(0, 1 - (765 - (x - 2098) * .16 - y) / 18);
    var u = near(x, y, 2108, 575, 58) * 1.2 + near(x, y, 2142, 545, 36) + near(x, y, 2444, 540, 46) * 1.5 + near(x, y, 2424, 588, 28) * 1.5 + near(x, y, 2266, 726, 28) * 1.8 + near(x, y, 2344, 716, 16) * 2 +
      near(x, y, 2229, 584, 9) * 2.5 + near(x, y, 2266, 662, 13) * 1.8 + near(x, y, 2318, 545, 16) + near(x, y, 2098, 655, 24) + coast * .5 + Math.max(0, noise(x / 9, y / 9) - .78) * 1.6;
    var f = near(x, y, 2130, 490, 60) * 1.8 + near(x, y, 2305, 560, 80) * 1.1 + Math.max(0, noise(x / 14 + 9, y / 12) - .55) * 2;
    var w = near(x, y, 2395, 650, 60) * .9 + Math.max(0, noise(x / 10 + 40, y / 10) - .75) * 1.6;
    return land(x, y, u, f, w);
  });

  // Rivers and reservoirs, stepped on the cell grid
  ctx.fillStyle = SEA;
  [[[2110, 462], [2108, 520], [2102, 600]], [[2122, 650], [2142, 680], [2158, 692], [2170, 714], [2184, 728], [2192, 755]], [[2266, 672], [2270, 690], [2264, 706], [2268, 740]], [[2404, 545], [2405, 560]], [[2388, 556], [2404, 560]]].forEach(function (l) {
    for (var i = 1; i < l.length; i++) {
      var n = Math.max(Math.abs(l[i][0] - l[i - 1][0]), Math.abs(l[i][1] - l[i - 1][1])) / 2;
      for (var s = 0; s <= n; s++) {
        if (rnd() < .2) continue;
        var px = l[i - 1][0] + (l[i][0] - l[i - 1][0]) * s / n, py = l[i - 1][1] + (l[i][1] - l[i - 1][1]) * s / n;
        ctx.fillRect((px & ~1) - OX, (py & ~1) - OY, rnd() < .3 ? 4 : 2, 2);
      }
    }
  });

  // Islands
  var isle = function (x, y) {
    return land(x, y, .3, .5 + near(x, y, 2140, 868, 60), near(x, y, 2110, 915, 44) * 6);
  };
  paint([[2080, 882], [2120, 870], [2144, 850], [2166, 834], [2186, 819], [2197, 812], [2197, 822], [2174, 848], [2160, 864], [2134, 884], [2110, 896], [2080, 902]], function (x, y) {
    return pick([BROWN, x < 2160 ? 3.5 : .5, YEL, 1.8, PINK, .9, RED, .2, GREEN, .7, SALMON, .5]);
  });
  paint([[2080, 908], [2126, 902], [2154, 912], [2170, 888], [2194, 866], [2220, 868], [2228, 850], [2236, 858], [2250, 846], [2262, 864], [2276, 860], [2306, 843], [2310, 836], [2320, 832],
    [2337, 834], [2330, 842], [2308, 850], [2276, 870], [2228, 892], [2186, 914], [2160, 925], [2110, 946], [2080, 954]], isle);
  paint([[2190, 828], [2204, 832], [2216, 846], [2206, 849], [2186, 836]], isle);
  paint([[2204, 810], [2226, 804], [2220, 812], [2210, 816]], isle);
  paint([[2254, 823], [2273, 824], [2271, 840], [2266, 832]], isle);
  paint([[2284, 762], [2316, 750], [2314, 754], [2290, 765]], isle);
  paint([[2235, 795], [2240, 795], [2238, 800]], isle);
  paint([[2098, 946], [2168, 918], [2172, 922], [2100, 952]], function () { return pick([SEA, 4, PINK, 1, SAND, 1]); });
  ctx.fillStyle = SEA;
  ctx.fillRect(2392 - OX, 782 - OY, 2, 2);
  ctx.fillRect(2390 - OX, 792 - OY, 2, 4);

  // South-western corner
  paint([[1290, 1440], [1664, 1440], [1650, 1454], [1637, 1480], [1622, 1498], [1610, 1520], [1600, 1519], [1574, 1508], [1434, 1480], [1308, 1452]], function () { return SEA; });
  paint([[1290, 1440], [1622, 1440], [1621, 1468], [1606, 1488], [1590, 1508], [1574, 1510], [1434, 1480], [1308, 1452]], function (x, y) {
    if (x > 1582 - (y - 1452) * .2 && x + y < 3088) return pick([SEA, 3, TEAL, 2, '#5d8699', 2]);
    return land(x, y, near(x, y, 1410, 1456, 34) + near(x, y, 1550, 1485, 36) * .9 + near(x, y, 1590, 1500, 16) * 2, near(x, y, 1370, 1450, 90) * 2.2, .25);
  });
})();
```
